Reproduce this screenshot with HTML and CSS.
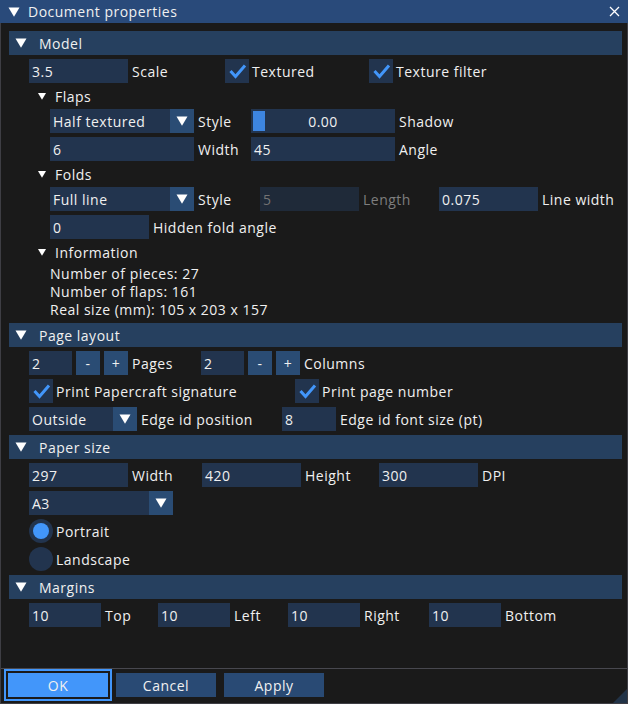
FILE: index.html
```html
<!DOCTYPE html>
<html>
<head>
<meta charset="utf-8">
<title>Document properties</title>
<link rel="stylesheet" href="styles.css">
</head>
<body>
<div class="window">
  <div class="titlebar">
    <svg class="arrow-big" width="12" height="10" viewBox="0 0 12 10"><polygon points="0.5,0.5 11.5,0.5 6,9.8" fill="#ffffff"/></svg>
    <span class="title">Document properties</span>
    <svg class="close" width="11" height="11" viewBox="0 0 11 11"><path d="M1 1L10 10M10 1L1 10" stroke="#ffffff" stroke-width="1.3" fill="none"/></svg>
  </div>

  <div class="content">
    <div class="header"><svg class="arrow-big" width="12" height="10" viewBox="0 0 12 10"><polygon points="0.5,0.5 11.5,0.5 6,9.8" fill="#ffffff"/></svg><span class="htext">Model</span></div>

    <div class="row ind1">
      <div class="field f196"><div class="input w99">3.5</div><span class="lbl">Scale</span></div>
      <div class="field f144"><div class="check"><svg width="24" height="24" viewBox="0 0 24 24"><polyline points="5.5,12 10.5,17.5 20,6.5" fill="none" stroke="#4296fa" stroke-width="3"/></svg></div><span class="lbl lbl-c">Textured</span></div>
      <div class="field"><div class="check"><svg width="24" height="24" viewBox="0 0 24 24"><polyline points="5.5,12 10.5,17.5 20,6.5" fill="none" stroke="#4296fa" stroke-width="3"/></svg></div><span class="lbl lbl-c">Texture filter</span></div>
    </div>

    <div class="tree ind1"><svg class="arrow-sm" width="8" height="7" viewBox="0 0 8 7"><polygon points="0,0 8,0 4,6.8" fill="#ffffff"/></svg><span class="ttext">Flaps</span></div>

    <div class="row ind2">
      <div class="field f201"><div class="combo w144"><span class="combo-text">Half textured</span><span class="combo-btn"><svg width="12" height="10" viewBox="0 0 12 10"><polygon points="0.5,0.5 11.5,0.5 6,9.8" fill="#ffffff"/></svg></span></div><span class="lbl">Style</span></div>
      <div class="field"><div class="slider w144"><span class="grab"></span><span>0.00</span></div><span class="lbl">Shadow</span></div>
    </div>
    <div class="row ind2">
      <div class="field f201"><div class="input w144">6</div><span class="lbl">Width</span></div>
      <div class="field"><div class="input w144">45</div><span class="lbl">Angle</span></div>
    </div>

    <div class="tree ind1"><svg class="arrow-sm" width="8" height="7" viewBox="0 0 8 7"><polygon points="0,0 8,0 4,6.8" fill="#ffffff"/></svg><span class="ttext">Folds</span></div>

    <div class="row ind2">
      <div class="field f210"><div class="combo w144"><span class="combo-text">Full line</span><span class="combo-btn"><svg width="12" height="10" viewBox="0 0 12 10"><polygon points="0.5,0.5 11.5,0.5 6,9.8" fill="#ffffff"/></svg></span></div><span class="lbl">Style</span></div>
      <div class="field f179"><div class="input w99 disabled">5</div><span class="lbl dim">Length</span></div>
      <div class="field"><div class="input w99">0.075</div><span class="lbl">Line width</span></div>
    </div>
    <div class="row ind2">
      <div class="field"><div class="input w99">0</div><span class="lbl">Hidden fold angle</span></div>
    </div>

    <div class="tree ind1"><svg class="arrow-sm" width="8" height="7" viewBox="0 0 8 7"><polygon points="0,0 8,0 4,6.8" fill="#ffffff"/></svg><span class="ttext">Information</span></div>
    <div class="info ind2">
      <div>Number of pieces: 27</div>
      <div>Number of flaps: 161</div>
      <div>Real size (mm): 105 x 203 x 157</div>
    </div>

    <div class="header"><svg class="arrow-big" width="12" height="10" viewBox="0 0 12 10"><polygon points="0.5,0.5 11.5,0.5 6,9.8" fill="#ffffff"/></svg><span class="htext">Page layout</span></div>

    <div class="row ind1">
      <div class="field f172"><div class="input w43">2</div><span class="btn-sm">-</span><span class="btn-sm">+</span><span class="lbl">Pages</span></div>
      <div class="field"><div class="input w43">2</div><span class="btn-sm">-</span><span class="btn-sm">+</span><span class="lbl">Columns</span></div>
    </div>
    <div class="row ind1">
      <div class="field f266"><div class="check"><svg width="24" height="24" viewBox="0 0 24 24"><polyline points="5.5,12 10.5,17.5 20,6.5" fill="none" stroke="#4296fa" stroke-width="3"/></svg></div><span class="lbl lbl-c">Print Papercraft signature</span></div>
      <div class="field"><div class="check"><svg width="24" height="24" viewBox="0 0 24 24"><polyline points="5.5,12 10.5,17.5 20,6.5" fill="none" stroke="#4296fa" stroke-width="3"/></svg></div><span class="lbl lbl-c">Print page number</span></div>
    </div>
    <div class="row ind1">
      <div class="field f253"><div class="combo w108"><span class="combo-text">Outside</span><span class="combo-btn"><svg width="12" height="10" viewBox="0 0 12 10"><polygon points="0.5,0.5 11.5,0.5 6,9.8" fill="#ffffff"/></svg></span></div><span class="lbl">Edge id position</span></div>
      <div class="field"><div class="input w54">8</div><span class="lbl">Edge id font size (pt)</span></div>
    </div>

    <div class="header"><svg class="arrow-big" width="12" height="10" viewBox="0 0 12 10"><polygon points="0.5,0.5 11.5,0.5 6,9.8" fill="#ffffff"/></svg><span class="htext">Paper size</span></div>

    <div class="row ind1">
      <div class="field f173"><div class="input w99">297</div><span class="lbl">Width</span></div>
      <div class="field f177"><div class="input w99">420</div><span class="lbl">Height</span></div>
      <div class="field"><div class="input w99">300</div><span class="lbl">DPI</span></div>
    </div>
    <div class="row ind1">
      <div class="combo w144"><span class="combo-text">A3</span><span class="combo-btn"><svg width="12" height="10" viewBox="0 0 12 10"><polygon points="0.5,0.5 11.5,0.5 6,9.8" fill="#ffffff"/></svg></span></div>
    </div>
    <div class="row ind1">
      <div class="field"><span class="radio on"></span><span class="lbl lbl-c">Portrait</span></div>
    </div>
    <div class="row ind1">
      <div class="field"><span class="radio"></span><span class="lbl lbl-c">Landscape</span></div>
    </div>

    <div class="header"><svg class="arrow-big" width="12" height="10" viewBox="0 0 12 10"><polygon points="0.5,0.5 11.5,0.5 6,9.8" fill="#ffffff"/></svg><span class="htext">Margins</span></div>

    <div class="row ind1">
      <div class="field f129"><div class="input w72">10</div><span class="lbl">Top</span></div>
      <div class="field f130"><div class="input w72">10</div><span class="lbl">Left</span></div>
      <div class="field f141"><div class="input w72">10</div><span class="lbl">Right</span></div>
      <div class="field"><div class="input w72">10</div><span class="lbl">Bottom</span></div>
    </div>
  </div>

  <div class="footer">
    <div class="sep"></div>
    <div class="buttons">
      <span class="btn btn-ok">OK</span>
      <span class="btn">Cancel</span>
      <span class="btn">Apply</span>
    </div>
  </div>
  <span class="grip"></span>
</div>
</body>
</html>
```

FILE: styles.css
```css
* { box-sizing: border-box; }
html, body { margin: 0; padding: 0; background: #1a1a1a; }
body {
  font-family: "Open Sans", "DejaVu Sans", sans-serif;
  font-size: 14px;
  letter-spacing: 0.5px;
  color: #f0f0f0;
}
.window {
  position: relative;
  width: 628px;
  height: 704px;
  background: #1a1a1a;
  border: 1px solid #3e3e44;
  border-top: none;
  display: flex;
  flex-direction: column;
}
.titlebar {
  height: 23px;
  margin: 0 -1px;
  background: #294a7a;
  display: flex;
  align-items: center;
  padding-left: 8px;
  flex: none;
}
.titlebar .title { margin-left: 8px; }
.close { margin-left: auto; margin-right: 8px; }
.arrow-big { flex: none; display: block; }
.arrow-sm { flex: none; display: block; }

.content {
  flex: 1;
  padding: 8px 5px 0 8px;
  display: flex;
  flex-direction: column;
  gap: 4px;
}
.header {
  height: 24px;
  background: #26405f;
  display: flex;
  align-items: center;
  padding-left: 6px;
  flex: none;
}
.htext { margin-left: 12px; }
.tree {
  height: 18px;
  display: flex;
  align-items: center;
  padding-left: 9px;
  flex: none;
}
.ttext { margin-left: 9px; }
.info { line-height: 18px; }

.row {
  height: 24px;
  display: flex;
  align-items: center;
  flex: none;
}
.ind1 { margin-left: 20px; }
.ind2 { margin-left: 41px; }

.field { display: flex; align-items: center; flex: none; height: 24px; }
.f129 { width: 129px; }
.f130 { width: 130px; }
.f141 { width: 141px; }
.f144 { width: 144px; }
.f172 { width: 172px; }
.f173 { width: 173px; }
.f177 { width: 177px; }
.f179 { width: 179px; }
.f196 { width: 196px; }
.f201 { width: 201px; }
.f210 { width: 210px; }
.f253 { width: 253px; }
.f266 { width: 266px; }

.lbl { margin-left: 4px; white-space: nowrap; }
.lbl-c { margin-left: 3px; }
.dim { color: #7e7e7e; }

.input {
  height: 24px;
  background: #22344e;
  display: flex;
  align-items: center;
  padding: 0 3px;
  flex: none;
}
.input.disabled { background: #1f2a39; color: #737373; }
.w43 { width: 43px; }
.w54 { width: 54px; }
.w72 { width: 72px; }
.w99 { width: 99px; }
.w108 { width: 108px; }
.w144 { width: 144px; }

.combo {
  height: 24px;
  display: flex;
  background: #22344e;
  flex: none;
}
.combo-text {
  flex: 1;
  display: flex;
  align-items: center;
  padding-left: 3px;
  white-space: nowrap;
}
.combo-btn {
  width: 24px;
  height: 24px;
  background: #2a4c74;
  display: flex;
  align-items: center;
  justify-content: center;
}

.slider {
  position: relative;
  height: 24px;
  background: #22344e;
  display: flex;
  align-items: center;
  justify-content: center;
  flex: none;
}
.grab {
  position: absolute;
  left: 2px;
  top: 2px;
  width: 12px;
  height: 20px;
  background: #3d85e0;
}

.check {
  width: 24px;
  height: 24px;
  background: #22344e;
  flex: none;
}
.check svg { display: block; }

.btn-sm {
  width: 24px;
  height: 24px;
  margin-left: 4px;
  background: #2a4c74;
  display: flex;
  align-items: center;
  justify-content: center;
  flex: none;
}

.radio {
  width: 24px;
  height: 24px;
  border-radius: 50%;
  background: #22344e;
  display: flex;
  align-items: center;
  justify-content: center;
  flex: none;
}
.radio.on::after {
  content: "";
  width: 16px;
  height: 16px;
  border-radius: 50%;
  background: #4296fa;
}

.footer { flex: none; padding-bottom: 6px; }
.sep { height: 1px; background: #48484f; }
.buttons {
  margin-top: 4px;
  padding-left: 7px;
  display: flex;
  gap: 8px;
}
.btn {
  width: 100px;
  height: 24px;
  background: #294a74;
  display: flex;
  align-items: center;
  justify-content: center;
}
.btn-ok {
  background: #4296fa;
  outline: 2px solid #4296fa;
  outline-offset: 2px;
}
.grip {
  position: absolute;
  right: 0;
  bottom: 0;
  width: 14px;
  height: 14px;
  background: #223347;
  clip-path: polygon(100% 0, 100% 100%, 0 100%);
}
```
